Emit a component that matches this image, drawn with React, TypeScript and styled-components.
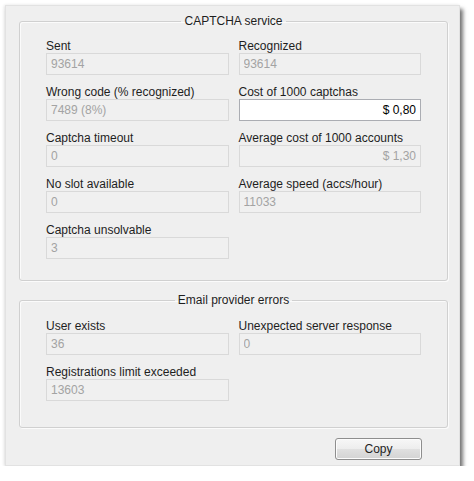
import styled, { createGlobalStyle } from 'styled-components';

type FieldData = {
  label: string;
  value: string;
  active?: boolean;
  alignRight?: boolean;
};

const captchaFields: FieldData[] = [
  { label: 'Sent', value: '93614' },
  { label: 'Recognized', value: '93614' },
  { label: 'Wrong code (% recognized)', value: '7489 (8%)' },
  { label: 'Cost of 1000 captchas', value: '$ 0,80', active: true, alignRight: true },
  { label: 'Captcha timeout', value: '0' },
  { label: 'Average cost of 1000 accounts', value: '$ 1,30', alignRight: true },
  { label: 'No slot available', value: '0' },
  { label: 'Average speed (accs/hour)', value: '11033' },
  { label: 'Captcha unsolvable', value: '3' },
];

const emailFields: FieldData[] = [
  { label: 'User exists', value: '36' },
  { label: 'Unexpected server response', value: '0' },
  { label: 'Registrations limit exceeded', value: '13603' },
];

const Field = ({ label, value, active, alignRight }: FieldData) => (
  <FieldWrap>
    <Label>{label}</Label>
    <TextBox
      readOnly
      disabled={!active}
      value={value}
      $active={active}
      $right={alignRight}
    />
  </FieldWrap>
);

const App = () => {
  return (
    <>
      <GlobalStyle />
      <Dialog>
        <GroupBox>
          <Legend>CAPTCHA service</Legend>
          <Grid $top={11} $bottom={21}>
            {captchaFields.map((f) => (
              <Field key={f.label} {...f} />
            ))}
          </Grid>
        </GroupBox>
        <GroupBox $gap={12}>
          <Legend>Email provider errors</Legend>
          <Grid $top={12} $bottom={26}>
            {emailFields.map((f) => (
              <Field key={f.label} {...f} />
            ))}
          </Grid>
        </GroupBox>
        <Footer>
          <Button type="button">Copy</Button>
        </Footer>
      </Dialog>
    </>
  );
};

export default App;

const GlobalStyle = createGlobalStyle`
  body {
    margin: 0;
    background: #ffffff;
    font-family: "Liberation Sans", Tahoma, Arial, sans-serif;
  }
`;

const Dialog = styled.div`
  box-sizing: border-box;
  margin: 5px 0 0 5px;
  width: 455px;
  height: 461px;
  padding: 8px 12px 0 14px;
  background: #efefef;
  border: 1px solid #e2e2e2;
  box-shadow: 3px 4px 4px rgba(0, 0, 0, 0.55), -1px 0 3px rgba(0, 0, 0, 0.1);
  display: flex;
  flex-direction: column;
`;

const GroupBox = styled.fieldset<{ $gap?: number }>`
  margin: ${(p) => p.$gap ?? 0}px 0 0 -1px;
  padding: 0;
  width: 429px;
  box-sizing: border-box;
  border: 1px solid #d0d0d0;
  border-radius: 3px;
  box-shadow: inset 1px 1px 0 #fbfbfb, 1px 1px 0 #fbfbfb;
`;

const Legend = styled.legend`
  margin: 0 auto;
  padding: 0 3px;
  font-size: 12px;
  line-height: 14px;
  color: #1e1e1e;
`;

const Grid = styled.div<{ $top: number; $bottom: number }>`
  display: grid;
  grid-template-columns: 1fr 1fr;
  column-gap: 10px;
  row-gap: 10px;
  padding: ${(p) => p.$top}px 26px ${(p) => p.$bottom}px 26px;
`;

const FieldWrap = styled.div`
  display: flex;
  flex-direction: column;
`;

const Label = styled.span`
  font-size: 12px;
  line-height: 14px;
  color: #1e1e1e;
  white-space: nowrap;
`;

const TextBox = styled.input<{ $active?: boolean; $right?: boolean }>`
  box-sizing: border-box;
  width: 100%;
  height: 22px;
  margin: 0;
  padding: 0 4px;
  font-family: inherit;
  font-size: 12px;
  text-align: ${(p) => (p.$right ? 'right' : 'left')};
  color: ${(p) => (p.$active ? '#000000' : '#a3a3a3')};
  -webkit-text-fill-color: ${(p) => (p.$active ? '#000000' : '#a3a3a3')};
  background: ${(p) => (p.$active ? '#ffffff' : '#f0f0f0')};
  border: 1px solid ${(p) => (p.$active ? '#abadb3' : '#d9d9d9')};
  outline: none;
  opacity: 1;
`;

const Footer = styled.div`
  display: flex;
  justify-content: flex-end;
  padding: 10px 25px 0 0;
`;

const Button = styled.button`
  width: 87px;
  height: 22px;
  font-family: inherit;
  font-size: 12px;
  color: #1e1e1e;
  border: 1px solid #8e8e8e;
  border-radius: 3px;
  background: linear-gradient(#f7f7f7 0%, #ededed 50%, #e0e0e0 51%, #d3d3d3 100%);
  box-shadow: inset 0 0 0 1px #fcfcfc;
  padding: 0;
`;
